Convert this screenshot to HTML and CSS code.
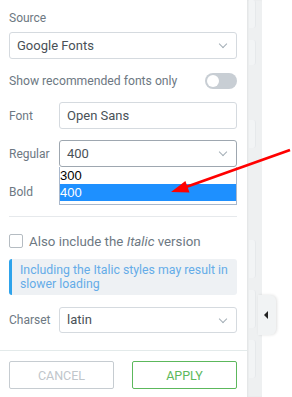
FILE: index.html
```html
<!DOCTYPE html>
<html lang="en">
<head>
    <meta charset="UTF-8">
    <meta name="viewport" content="width=device-width, initial-scale=1.0">
    <title>Font settings</title>
    <link rel="stylesheet" href="styles.css">
</head>
<body>
    <div class="panel">
        <div class="panel-body">
            <div class="label-top">Source</div>
            <div class="select">Google Fonts<span class="chevron"></span></div>

            <div class="switch-row">
                <span class="label">Show recommended fonts only</span>
                <span class="switch"><span class="knob"></span></span>
            </div>

            <div class="row row-font">
                <span class="row-label">Font</span>
                <div class="input">Open Sans</div>
            </div>

            <div class="row row-regular">
                <span class="row-label">Regular</span>
                <div class="select focused">400<span class="chevron"></span></div>
                <ul class="options">
                    <li>300</li>
                    <li class="selected">400</li>
                </ul>
            </div>

            <div class="row row-bold">
                <span class="row-label">Bold</span>
            </div>

            <hr class="divider">

            <label class="check-row">
                <span class="checkbox"></span>
                <span>Also include the <em>Italic</em> version</span>
            </label>

            <div class="info">Including the Italic styles may result in slower loading</div>

            <div class="row row-charset">
                <span class="row-label">Charset</span>
                <div class="select">latin<span class="chevron"></span></div>
            </div>
        </div>

        <div class="panel-footer">
            <button class="btn btn-cancel">CANCEL</button>
            <button class="btn btn-apply">APPLY</button>
        </div>
    </div>

    <div class="side">
        <div class="rail">
            <span class="seg s1"></span>
            <span class="seg s2"></span>
            <span class="seg s3"></span>
            <span class="seg s4"></span>
            <span class="seg s5"></span>
            <span class="seg s6"></span>
        </div>
        <div class="tab"><span class="tri"></span></div>
    </div>

    <!-- annotation arrow -->
    <svg class="arrow" width="292" height="397" viewBox="0 0 292 397">
        <line x1="290" y1="150" x2="186" y2="187" stroke="#f00" stroke-width="2.8"/>
        <polygon points="171,192 189.5,192.5 185.4,181" fill="#f00"/>
    </svg>
</body>
</html>
```

FILE: styles.css
```css
body {
    margin: 0;
    font-family: Roboto, "Liberation Sans", sans-serif;
    display: flex;
    height: 397px;
    overflow: hidden;
    background: #fff;
}
.panel {
    width: 247px;
    flex: none;
    background: #fff;
    display: flex;
    flex-direction: column;
}
.panel-body {
    padding: 11px 10px 0 9px;
}
.label-top {
    font-size: 12px;
    line-height: 15px;
    color: #6d7882;
}
.select, .input {
    position: relative;
    box-sizing: border-box;
    height: 27px;
    border: 1px solid #d5dadf;
    border-radius: 3px;
    padding: 0 7px;
    font-size: 13px;
    line-height: 25px;
    color: #495157;
    flex: 1;
}
.label-top + .select {
    margin-top: 6px;
}
.select.focused {
    border-color: #9ea7b0;
}
.chevron {
    position: absolute;
    right: 10px;
    top: 8px;
    width: 5px;
    height: 5px;
    border-right: 1px solid #a4afb7;
    border-bottom: 1px solid #a4afb7;
    transform: rotate(45deg);
}
.switch-row {
    margin-top: 14px;
    height: 16px;
    display: flex;
    align-items: center;
    justify-content: space-between;
}
.label {
    font-size: 12.2px;
    color: #6d7882;
}
.switch {
    width: 32px;
    height: 16px;
    border-radius: 8px;
    background: #c8ced4;
    position: relative;
}
.knob {
    position: absolute;
    left: 2px;
    top: 2px;
    width: 12px;
    height: 12px;
    border-radius: 50%;
    background: #fff;
}
.row {
    display: flex;
    align-items: center;
    height: 27px;
    margin-top: 11px;
}
.row-font {
    margin-top: 13px;
}
.row-regular {
    position: relative;
}
.row-charset {
    margin-top: 12px;
    height: 26px;
}
.row-charset .select {
    height: 26px;
    line-height: 24px;
}
.row-label {
    width: 50px;
    flex: none;
    font-size: 12px;
    color: #6d7882;
}
.options {
    position: absolute;
    left: 50px;
    right: 0;
    top: 27px;
    margin: 0;
    padding: 0 0 3px;
    list-style: none;
    background: #fff;
    border: 1px solid #a9b8cc;
    border-top: none;
    font-family: "Liberation Sans", Arial, sans-serif;
    font-size: 13px;
    line-height: 17px;
    color: #000;
    z-index: 2;
}
.options .selected {
    background: #1e90ff;
    color: #fff;
}
.divider {
    margin: 11px 0 0;
    border: none;
    border-top: 1px solid #e6e9ec;
}
.check-row {
    margin-top: 17px;
    display: flex;
    align-items: center;
    gap: 6px;
    font-size: 13.3px;
    color: #6d7882;
    height: 14px;
}
.checkbox {
    box-sizing: border-box;
    width: 14px;
    height: 14px;
    border: 1px solid #b5bcc2;
    border-radius: 2px;
}
.info {
    margin-top: 11px;
    background: #eef1f4;
    border-left: 3px solid #2ea3eb;
    border-radius: 3px;
    padding: 4px 8px;
    font-size: 12.3px;
    line-height: 14px;
    color: #64ace8;
}
.panel-footer {
    margin-top: 17px;
    border-top: 1px solid #e3eaea;
    padding: 10px 10px 0 9px;
    display: flex;
    justify-content: space-between;
}
.btn {
    width: 105px;
    height: 28px;
    background: #fff;
    border-radius: 2px;
    font-family: Roboto, "Liberation Sans", sans-serif;
    font-size: 12.5px;
    cursor: pointer;
}
.btn-cancel {
    border: 1px solid #c6ccd1;
    color: #c0c6cb;
}
.btn-apply {
    border: 1px solid #5cb85c;
    color: #5cb85c;
}
.side {
    flex: 1;
    position: relative;
}
.rail {
    position: relative;
    width: 15px;
    height: 100%;
    background: #eef0f1;
    box-shadow: inset 1px 0 2px rgba(0, 0, 0, 0.05);
}
.seg {
    position: absolute;
    left: 2px;
    width: 6px;
    border-radius: 0 3px 3px 0;
    background: #f2f4f5;
    border-right: 1px solid #e6e9eb;
}
.s1 { top: 0; height: 28px; }
.s2 { top: 40px; height: 25px; }
.s3 { top: 120px; height: 28px; }
.s4 { top: 240px; height: 38px; }
.s5 { top: 290px; height: 38px; }
.s6 { top: 340px; height: 38px; }
.tab {
    position: absolute;
    left: 11px;
    top: 295px;
    width: 18px;
    height: 40px;
    background: #f1f3f4;
    border-radius: 0 6px 6px 0;
    box-shadow: 1px 0 3px rgba(0, 0, 0, 0.12);
}
.tri {
    position: absolute;
    left: 6px;
    top: 16px;
    border-top: 4px solid transparent;
    border-bottom: 4px solid transparent;
    border-right: 4px solid #222;
}
.arrow {
    position: absolute;
    left: 0;
    top: 0;
    pointer-events: none;
    z-index: 5;
}
```
